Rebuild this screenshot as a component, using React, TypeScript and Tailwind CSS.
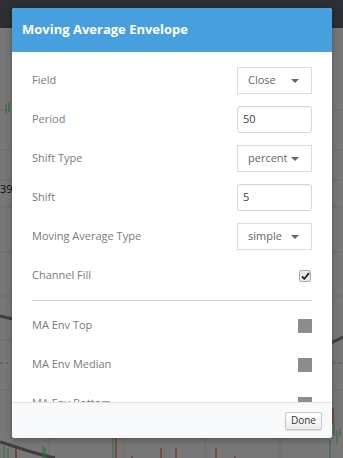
const font = { fontFamily: '"Open Sans", "Liberation Sans", sans-serif' };

function Caret() {
  return (
    <svg width="8" height="4" viewBox="0 0 8 4" className="shrink-0">
      <path d="M0 0h8L4 4z" fill="#666" />
    </svg>
  );
}

function SelectBox({ value }: { value: string }) {
  return (
    <div className="flex h-[27px] w-[75px] items-center justify-between border border-[#dcdcdc] bg-white pl-[10px] pr-[12px] text-[11px] text-[#666]">
      <span>{value}</span>
      <Caret />
    </div>
  );
}

function InputBox({ value }: { value: string }) {
  return (
    <div className="flex h-[27px] w-[75px] items-center rounded-[3px] border border-[#d6d6d6] bg-white px-[5px] text-[11px] text-[#444] shadow-[inset_0_1px_1px_rgba(0,0,0,0.05)]">
      {value}
    </div>
  );
}

function Row({ label, children }: { label: string; children: React.ReactNode }) {
  return (
    <div className="flex h-[39px] items-center justify-between">
      <span className="text-[11px] text-[#7a7a7a]">{label}</span>
      {children}
    </div>
  );
}

function Swatch() {
  return <div className="h-[14px] w-[14px] bg-[#8c8c8c]" />;
}

function Background() {
  return (
    <div className="flex h-[458px] w-[343px] flex-col bg-[#777777]">
      <div className="h-7 bg-[#2c2f33]" />
      <svg width="343" height="430" className="block">
        {[82, 122, 152, 179, 224, 268, 312, 362].map((y) => (
          <line key={y} x1="0" x2="343" y1={y} y2={y} stroke="#6e6e6e" strokeWidth="1" />
        ))}
        {[49, 124, 205, 280].map((x) => (
          <line key={x} x1={x} x2={x} y1="0" y2="430" stroke="#6e6e6e" strokeWidth="1" />
        ))}
        <path d="M0 288 C 20 292, 40 300, 60 310" stroke="#3f3f3f" strokeWidth="3" fill="none" />
        <path d="M0 414 C 20 420, 35 426, 55 430" stroke="#3f3f3f" strokeWidth="3" fill="none" />
        <path d="M325 318 L 343 309" stroke="#3f3f3f" strokeWidth="3" fill="none" />
        <line x1="0" x2="8" y1="335" y2="335" stroke="#8a3a2a" strokeDasharray="3 3" />
        <line x1="332" x2="343" y1="335" y2="335" stroke="#8a3a2a" strokeDasharray="3 3" />
        <path d="M6 76v10M9 74v10" stroke="#2f6e3c" strokeWidth="1" />
        <path d="M4 418v12M8 420v10M16 424v6M43 418v12M45 420v10M113 400v30M330 412v18M334 395v12M337 402v14M340 400v8" stroke="#2f6e3c" strokeWidth="1" />
        <path d="M16 418v12M116 400v30M132 428v2M161 420v10M176 420v10M216 420v10M235 428v2M333 380v16" stroke="#7a2010" strokeWidth="1" />
        <text x="0" y="165" fontSize="11" fill="#111" style={font}>39</text>
      </svg>
    </div>
  );
}

export default function App() {
  return (
    <div className="relative h-[458px] w-[343px] overflow-hidden" style={font}>
      <Background />
      <div className="absolute left-[12px] top-[8px] flex h-[430px] w-[320px] flex-col overflow-hidden rounded-[3px] bg-white shadow-[0_2px_6px_rgba(0,0,0,0.3)]">
        <div className="flex h-[44px] shrink-0 items-center bg-[#479fdd] px-[10px] text-[13px] font-bold text-white">
          Moving Average Envelope
        </div>
        <div className="flex-1 overflow-hidden px-[20px] pt-[9px]">
          <Row label="Field">
            <SelectBox value="Close" />
          </Row>
          <Row label="Period">
            <InputBox value="50" />
          </Row>
          <Row label="Shift Type">
            <SelectBox value="percent" />
          </Row>
          <Row label="Shift">
            <InputBox value="5" />
          </Row>
          <Row label="Moving Average Type">
            <SelectBox value="simple" />
          </Row>
          <Row label="Channel Fill">
            <div className="mr-[1px] flex h-[12px] w-[12px] items-center justify-center rounded-[2px] border border-[#aaa] bg-[#e8e8e8]">
              <svg width="9" height="8" viewBox="0 0 9 8">
                <path d="M1 4.5l2.3 2.3L8 1.2" stroke="#222" strokeWidth="1.8" fill="none" />
              </svg>
            </div>
          </Row>
          <div className="mt-[5px] mb-[5px] border-t border-[#cfcfcf]" />
          <Row label="MA Env Top">
            <Swatch />
          </Row>
          <Row label="MA Env Median">
            <Swatch />
          </Row>
          <Row label="MA Env Bottom">
            <Swatch />
          </Row>
        </div>
        <div className="flex h-[36px] shrink-0 items-center justify-end border-t border-[#e2e2e2] bg-[#f8f9fb] px-[10px]">
          <button className="h-[18px] rounded-[2px] border border-[#c8c8c8] bg-gradient-to-b from-white to-[#ececec] px-[5px] text-[10px] text-[#333] shadow-[0_1px_1px_rgba(0,0,0,0.1)]">
            Done
          </button>
        </div>
      </div>
    </div>
  );
}
